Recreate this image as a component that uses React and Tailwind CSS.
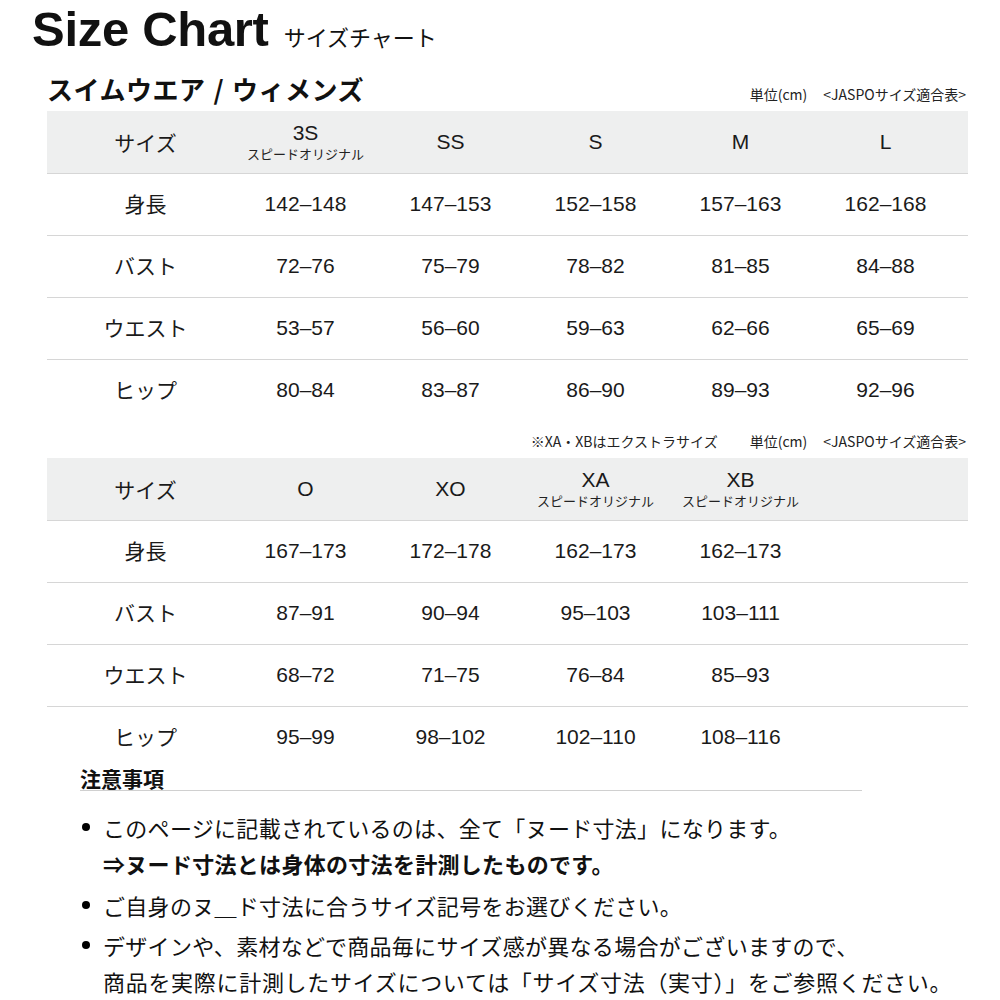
const table1 = {
  heads: [
    { label: '3S', sub: 'スピードオリジナル' },
    { label: 'SS' },
    { label: 'S' },
    { label: 'M' },
    { label: 'L' },
  ],
  rows: [
    ['身長', '142–148', '147–153', '152–158', '157–163', '162–168'],
    ['バスト', '72–76', '75–79', '78–82', '81–85', '84–88'],
    ['ウエスト', '53–57', '56–60', '59–63', '62–66', '65–69'],
    ['ヒップ', '80–84', '83–87', '86–90', '89–93', '92–96'],
  ],
};

const table2 = {
  heads: [
    { label: 'O' },
    { label: 'XO' },
    { label: 'XA', sub: 'スピードオリジナル' },
    { label: 'XB', sub: 'スピードオリジナル' },
    { label: '' },
  ],
  rows: [
    ['身長', '167–173', '172–178', '162–173', '162–173', ''],
    ['バスト', '87–91', '90–94', '95–103', '103–111', ''],
    ['ウエスト', '68–72', '71–75', '76–84', '85–93', ''],
    ['ヒップ', '95–99', '98–102', '102–110', '108–116', ''],
  ],
};

function SizeTable({ data }) {
  return (
    <div className="w-[921px] font-['Liberation_Sans','Noto_Sans_CJK_JP',sans-serif] text-[#1a1a1a]">
      <div className="grid grid-cols-[186px_145px_145px_145px_145px_145px_10px] h-[62px] bg-[#eeefef]">
        <div className="flex items-center justify-center pl-[11px] text-[21px] leading-[22px] font-['Noto_Sans_CJK_JP',sans-serif]">サイズ</div>
        {data.heads.map((h, i) => (
          <div key={i} className="flex flex-col items-center justify-center">
            <div className="text-[21px] leading-[22px]">{h.label}</div>
            {h.sub && <div className="mt-[2px] text-[13px] leading-[16px] font-['Noto_Sans_CJK_JP',sans-serif] text-[#222]">{h.sub}</div>}
          </div>
        ))}
        <div />
      </div>
      {data.rows.map((r, i) => (
        <div key={i} className="grid grid-cols-[186px_145px_145px_145px_145px_145px_10px] h-[62px] border-t border-[#d6d6d6]">
          <div className="flex items-center justify-center pl-[11px] pb-[2px] text-[21px] font-['Noto_Sans_CJK_JP',sans-serif]">{r[0]}</div>
          {r.slice(1).map((v, j) => (
            <div key={j} className="flex items-center justify-center pb-[2px] text-[21px]">{v}</div>
          ))}
          <div />
        </div>
      ))}
    </div>
  );
}

function Unit() {
  return (
    <>
      <span>単位(cm)</span>
      <span className="ml-[16px]">&lt;JASPOサイズ適合表&gt;</span>
    </>
  );
}

function Bullet({ children }) {
  return (
    <li className="flex">
      <span className="w-[23px] h-[36px] flex items-center shrink-0">
        <span className="ml-[2px] w-[8px] h-[8px] rounded-full bg-black" />
      </span>
      <div>{children}</div>
    </li>
  );
}

export default function App() {
  return (
    <div className="w-[1000px] h-[1000px] bg-white overflow-hidden text-[#111]">
      {/* title */}
      <div className="h-[53px] pt-[5px] pl-[32px] flex items-baseline gap-[15px]">
        <h1 className="text-[49px] leading-[49px] font-bold font-['Liberation_Sans',sans-serif] tracking-[-0.3px]">Size Chart</h1>
        <span className="text-[22px] leading-[22px] font-['Noto_Sans_CJK_JP',sans-serif]">サイズチャート</span>
      </div>

      <div className="pl-[47px]">
        {/* section heading */}
        <div className="w-[921px] h-[58px] flex items-end justify-between pb-[9px] font-['Noto_Sans_CJK_JP',sans-serif]">
          <h2 className="text-[26px] leading-[26px] font-bold tracking-[0.5px]">
            スイムウエア<span className="mx-[8px]">/</span>ウィメンズ
          </h2>
          <div className="text-[14px] leading-[16px] pr-[2px] text-[#222]"><Unit /></div>
        </div>

        <SizeTable data={table1} />

        <div className="w-[921px] h-[37px] flex items-center justify-end pr-[2px] pt-[2px] text-[14px] leading-[16px] text-[#222] font-['Noto_Sans_CJK_JP',sans-serif]">
          <span className="mr-[32px]">※XA・XBはエクストラサイズ</span>
          <Unit />
        </div>

        <SizeTable data={table2} />
      </div>

      {/* notes */}
      <div className="pl-[80px] font-['Noto_Sans_CJK_JP',sans-serif]">
        <div className="w-[782px] h-[23px] border-b border-[#d0d0d0] text-[21px] leading-[20px] font-bold">注意事項</div>
        <ul className="pt-[18px] text-[22px] leading-[36px] tracking-[0.3px]">
          <Bullet>
            <div>このページに記載されているのは、全て「ヌード寸法」になります。</div>
            <div className="font-bold">⇒ヌード寸法とは身体の寸法を計測したものです。</div>
          </Bullet>
          <div className="mt-[6px]">
            <Bullet>ご自身のヌ＿ド寸法に合うサイズ記号をお選びください。</Bullet>
          </div>
          <div className="mt-[4px]">
            <Bullet>
              <div>デザインや、素材などで商品毎にサイズ感が異なる場合がございますので、</div>
              <div className="tracking-[0.7px]">商品を実際に計測したサイズについては「サイズ寸法（実寸）」をご参照ください。</div>
            </Bullet>
          </div>
        </ul>
      </div>
    </div>
  );
}
